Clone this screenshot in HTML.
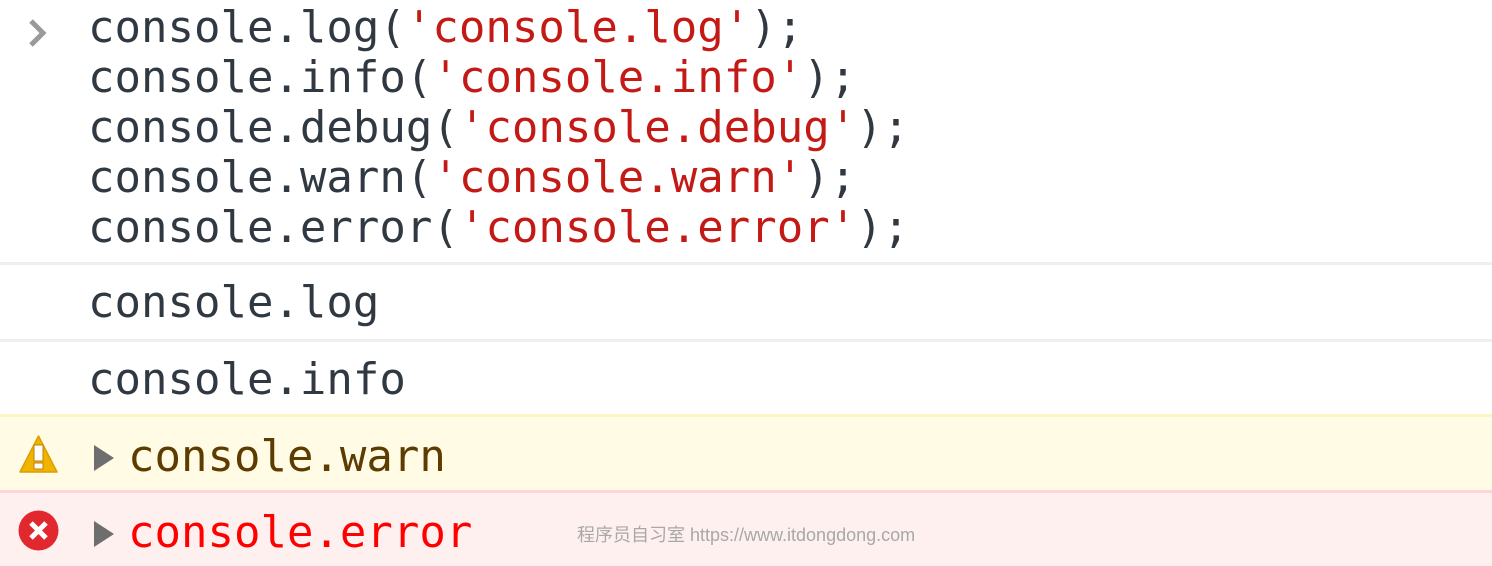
<!DOCTYPE html>
<html><head><meta charset="utf-8"><style>
html,body{margin:0;padding:0;background:#fff;width:1492px;height:566px;overflow:hidden}
body{font-family:"DejaVu Sans Mono","Liberation Mono",monospace;font-size:44px;color:#303942}
.cmd{position:absolute;left:0;top:0;width:1492px;height:262px}
.cmd pre{margin:0;position:absolute;left:88px;top:0;font:inherit;line-height:50px;padding-top:3px}
.s{color:#c41a16}
.row{position:absolute;left:0;width:1492px;box-sizing:border-box}
.t{position:absolute;left:88px;white-space:pre}
</style></head><body>
<div class="cmd">
<svg style="position:absolute;left:28px;top:18px" width="22" height="30" viewBox="0 0 22 30"><path d="M3 3 L15 15 L3 27" fill="none" stroke="#9a9a9a" stroke-width="5"/></svg>
<pre>console.log(<span class="s">'console.log'</span>);
console.info(<span class="s">'console.info'</span>);
console.debug(<span class="s">'console.debug'</span>);
console.warn(<span class="s">'console.warn'</span>);
console.error(<span class="s">'console.error'</span>);</pre>
</div>
<div class="row" style="top:262px;height:77px;border-top:3px solid #efefef"><span class="t" style="top:12px">console.log</span></div>
<div class="row" style="top:339px;height:75px;border-top:3px solid #efefef"><span class="t" style="top:12px">console.info</span></div>
<div class="row" style="top:414px;height:76px;background:#fffbe5;border-top:3px solid #fff5c2">
<svg style="position:absolute;left:18px;top:17px" width="41" height="41" viewBox="0 0 41 41"><path d="M20.5 2 L39 38 L2 38 Z" fill="#f0b400" stroke="#d9a000" stroke-width="1.5" stroke-linejoin="round"/><rect x="16" y="11" width="9" height="16" fill="#fff" stroke="#c08000" stroke-width="1"/><rect x="16" y="29" width="9" height="6" fill="#fff" stroke="#c08000" stroke-width="1"/></svg>
<svg style="position:absolute;left:94px;top:28px" width="20" height="26" viewBox="0 0 20 26"><path d="M0 0 L20 13 L0 26 Z" fill="#6e6e6e"/></svg>
<span class="t" style="left:128px;top:14px;color:#5c3c00">console.warn</span></div>
<div class="row" style="top:490px;height:76px;background:#fff0f0;border-top:3px solid #ffd6d6">
<svg style="position:absolute;left:18px;top:17px" width="41" height="41" viewBox="0 0 41 41"><circle cx="20.5" cy="20.5" r="20" fill="#e0282e"/><path d="M13 13 L28 28 M28 13 L13 28" stroke="#fff" stroke-width="5"/></svg>
<svg style="position:absolute;left:94px;top:28px" width="20" height="26" viewBox="0 0 20 26"><path d="M0 0 L20 13 L0 26 Z" fill="#6e6e6e"/></svg>
<span class="t" style="left:128px;top:14px;color:#ff0000">console.error</span>
<span style="position:absolute;left:577px;top:28px;font-family:'Liberation Sans','Noto Sans CJK SC',sans-serif;font-size:18px;color:#a8a8a8">程序员自习室 https://www.itdongdong.com</span>
</div>
</body></html>
